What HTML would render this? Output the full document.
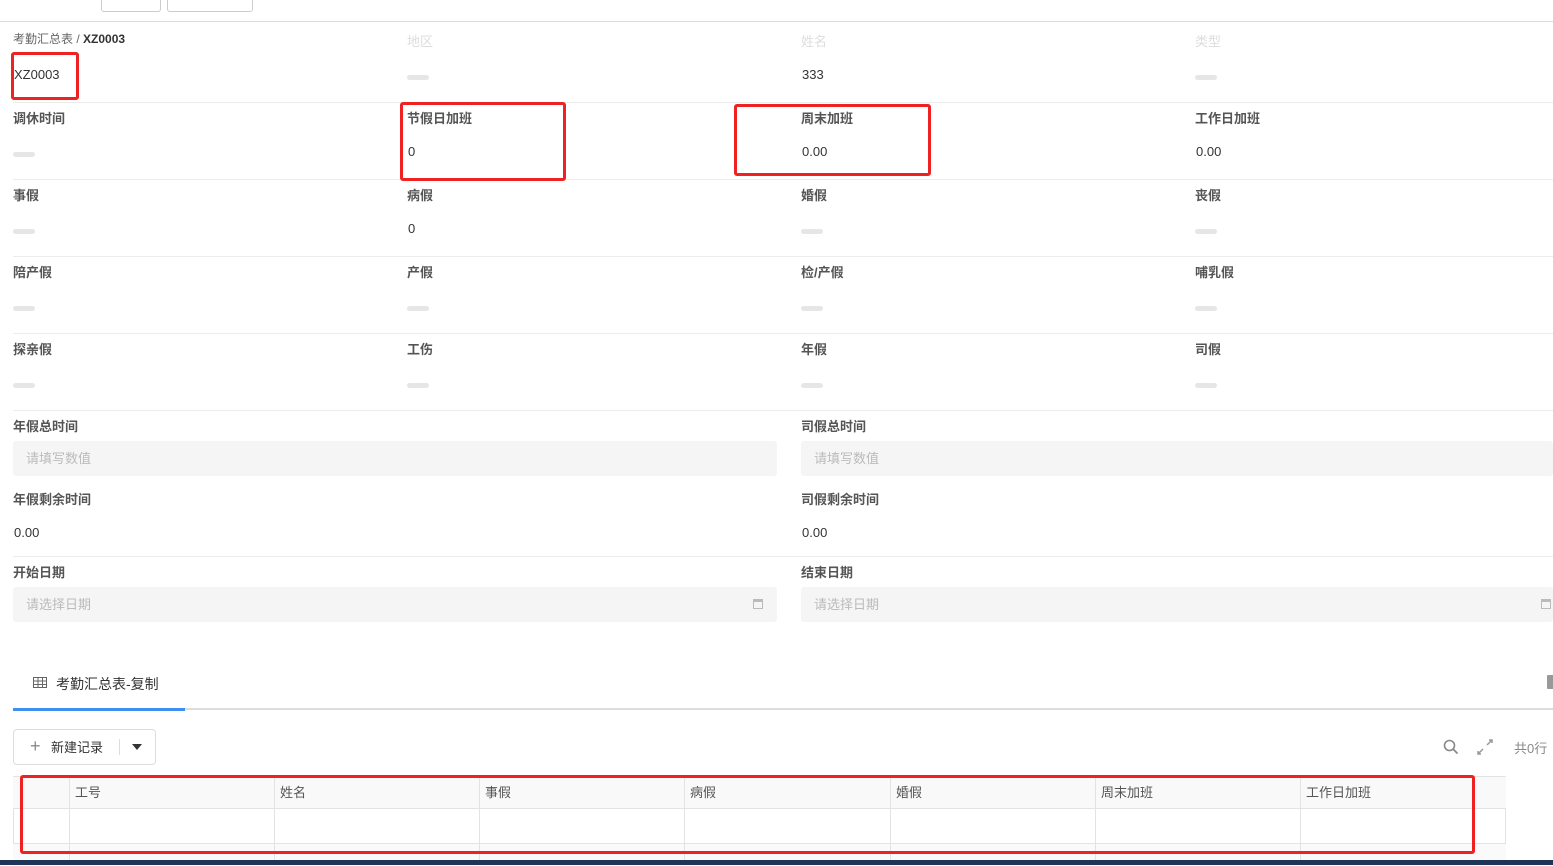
<!DOCTYPE html><html><head><meta charset="utf-8"><style>
body{margin:0;width:1553px;height:865px;overflow:hidden;background:#fff;font-family:"Liberation Sans","Noto Sans CJK SC",sans-serif;position:relative;color:#333}
.a{position:absolute}
.lb{position:absolute;font-size:13px;color:#555;font-weight:bold;line-height:16px;margin-top:1px}
.lf{position:absolute;font-size:13px;color:#ddd;line-height:16px;margin-top:1px}
.v{position:absolute;font-size:13px;color:#333;line-height:16px;margin-top:1px}
.d{position:absolute;width:22px;height:5px;border-radius:3px;background:#e6e6e6}
.hl{position:absolute;left:13px;right:0;height:1px;background:#ececec}
.in{position:absolute;height:35px;background:#f5f5f5;border-radius:3px;font-size:13px;color:#bbb;line-height:35px;padding-left:13px;box-sizing:border-box}
.red{position:absolute;border:3px solid #ee2222;border-radius:3px;box-sizing:border-box}
.th{position:absolute;font-size:13px;color:#555;top:782px}
</style></head><body>
<div class="a" style="left:101px;top:-5px;width:58px;height:15px;border:1px solid #ccc;border-radius:3px"></div>
<div class="a" style="left:167px;top:-5px;width:84px;height:15px;border:1px solid #ccc;border-radius:3px"></div>
<div class="a" style="left:0;right:0;top:21px;height:1px;background:#ddd"></div>
<div class="a" style="left:13px;top:30px;font-size:12px;color:#666">考勤汇总表 / <b style="color:#333">XZ0003</b></div>
<div class="lf" style="left:407px;top:33px">地区</div><div class="lf" style="left:801px;top:33px">姓名</div><div class="lf" style="left:1195px;top:33px">类型</div>
<div class="v" style="left:14px;top:66px">XZ0003</div><div class="d" style="left:407px;top:75px"></div><div class="v" style="left:802px;top:66px">333</div><div class="d" style="left:1195px;top:75px"></div>
<div class="hl" style="top:102px"></div><div class="hl" style="top:179px"></div><div class="hl" style="top:256px"></div><div class="hl" style="top:333px"></div><div class="hl" style="top:410px"></div><div class="hl" style="top:556px"></div>
<div class="lb" style="left:13px;top:110px">调休时间</div><div class="lb" style="left:407px;top:110px">节假日加班</div><div class="lb" style="left:801px;top:110px">周末加班</div><div class="lb" style="left:1195px;top:110px">工作日加班</div>
<div class="d" style="left:13px;top:152px"></div><div class="v" style="left:408px;top:143px">0</div><div class="v" style="left:802px;top:143px">0.00</div><div class="v" style="left:1196px;top:143px">0.00</div>
<div class="lb" style="left:13px;top:187px">事假</div><div class="lb" style="left:407px;top:187px">病假</div><div class="lb" style="left:801px;top:187px">婚假</div><div class="lb" style="left:1195px;top:187px">丧假</div>
<div class="d" style="left:13px;top:229px"></div><div class="v" style="left:408px;top:220px">0</div><div class="d" style="left:801px;top:229px"></div><div class="d" style="left:1195px;top:229px"></div>
<div class="lb" style="left:13px;top:264px">陪产假</div><div class="lb" style="left:407px;top:264px">产假</div><div class="lb" style="left:801px;top:264px">检/产假</div><div class="lb" style="left:1195px;top:264px">哺乳假</div>
<div class="d" style="left:13px;top:306px"></div><div class="d" style="left:407px;top:306px"></div><div class="d" style="left:801px;top:306px"></div><div class="d" style="left:1195px;top:306px"></div>
<div class="lb" style="left:13px;top:341px">探亲假</div><div class="lb" style="left:407px;top:341px">工伤</div><div class="lb" style="left:801px;top:341px">年假</div><div class="lb" style="left:1195px;top:341px">司假</div>
<div class="d" style="left:13px;top:383px"></div><div class="d" style="left:407px;top:383px"></div><div class="d" style="left:801px;top:383px"></div><div class="d" style="left:1195px;top:383px"></div>
<div class="lb" style="left:13px;top:418px">年假总时间</div><div class="lb" style="left:801px;top:418px">司假总时间</div>
<div class="in" style="left:13px;top:441px;width:764px">请填写数值</div><div class="in" style="left:801px;top:441px;width:752px">请填写数值</div>
<div class="lb" style="left:13px;top:491px">年假剩余时间</div><div class="lb" style="left:801px;top:491px">司假剩余时间</div>
<div class="v" style="left:14px;top:524px">0.00</div><div class="v" style="left:802px;top:524px">0.00</div>
<div class="lb" style="left:13px;top:564px">开始日期</div><div class="lb" style="left:801px;top:564px">结束日期</div>
<div class="in" style="left:13px;top:587px;width:764px">请选择日期<span style="position:absolute;right:14px;top:12px;width:10px;height:10px;border:1.5px solid #bbb;border-top-width:3px;box-sizing:border-box"></span></div>
<div class="in" style="left:801px;top:587px;width:752px">请选择日期<span style="position:absolute;right:2px;top:12px;width:10px;height:10px;border:1.5px solid #bbb;border-top-width:3px;box-sizing:border-box"></span></div>
<svg class="a" style="left:33px;top:677px" width="15" height="12"><rect x="0.5" y="0.5" width="13" height="10" fill="none" stroke="#666"/><path d="M0 4h14M0 7.5h14M5 0v11M9.5 0v11" stroke="#666"/></svg>
<div class="a" style="left:56px;top:674px;font-size:14px;color:#333">考勤汇总表-复制</div>
<div class="a" style="left:1547px;top:675px;width:8px;height:14px;background:#999;border-radius:1px"></div>
<div class="a" style="left:13px;right:0;top:708px;height:2px;background:#ddd"></div>
<div class="a" style="left:13px;width:172px;top:708px;height:3px;background:#3d8ff0"></div>
<div class="a" style="left:13px;top:729px;width:141px;height:34px;border:1px solid #ddd;border-radius:4px"></div>
<div class="a" style="left:30px;top:737px;font-size:18px;color:#888;line-height:18px">+</div>
<div class="a" style="left:51px;top:737px;font-size:13px;color:#333">新建记录</div>
<div class="a" style="left:119px;top:739px;width:1px;height:16px;background:#ddd"></div>
<div class="a" style="left:132px;top:744px;border:5px solid transparent;border-top:6px solid #333;border-bottom:0"></div>
<svg class="a" style="left:1443px;top:739px" width="16" height="16"><circle cx="6.5" cy="6.5" r="5" fill="none" stroke="#888" stroke-width="1.6"/><path d="M10 10l4.5 4.5" stroke="#888" stroke-width="1.8"/></svg>
<svg class="a" style="left:1477px;top:739px" width="17" height="16"><path d="M10 6l5-5M12 1h3v3M6 10l-5 5M1 12v3h3" stroke="#999" stroke-width="1.5" fill="none"/></svg>
<div class="a" style="left:1514px;top:738px;font-size:13px;color:#888">共0行</div>
<div class="a" style="left:13px;top:776px;width:1493px;height:90px;border-left:1px solid #e3e3e3;border-right:1px solid #e3e3e3;box-sizing:border-box"></div>
<div class="a" style="left:13px;top:776px;width:1493px;height:33px;background:#f9f9f9;border-top:1px solid #e3e3e3;border-bottom:1px solid #e3e3e3;box-sizing:border-box"></div>
<div class="a" style="left:13px;top:843px;width:1493px;height:22px;background:#fafafa;border-top:1px solid #e3e3e3"></div>
<div class="a" style="left:69px;top:776px;width:1px;height:89px;background:#e3e3e3"></div>
<div class="a" style="left:274px;top:776px;width:1px;height:89px;background:#e3e3e3"></div>
<div class="a" style="left:479px;top:776px;width:1px;height:89px;background:#e3e3e3"></div>
<div class="a" style="left:684px;top:776px;width:1px;height:89px;background:#e3e3e3"></div>
<div class="a" style="left:890px;top:776px;width:1px;height:89px;background:#e3e3e3"></div>
<div class="a" style="left:1095px;top:776px;width:1px;height:89px;background:#e3e3e3"></div>
<div class="a" style="left:1300px;top:776px;width:1px;height:89px;background:#e3e3e3"></div>
<div class="th" style="left:75px">工号</div><div class="th" style="left:280px">姓名</div><div class="th" style="left:485px">事假</div><div class="th" style="left:690px">病假</div><div class="th" style="left:896px">婚假</div><div class="th" style="left:1101px">周末加班</div><div class="th" style="left:1306px">工作日加班</div>
<div class="a" style="left:0;right:0;top:860px;height:5px;background:#1d3658"></div>
<div class="red" style="left:11px;top:52px;width:68px;height:48px"></div>
<div class="red" style="left:400px;top:102px;width:166px;height:79px"></div>
<div class="red" style="left:734px;top:104px;width:197px;height:72px"></div>
<div class="red" style="left:20px;top:775px;width:1455px;height:79px"></div>
</body></html>
